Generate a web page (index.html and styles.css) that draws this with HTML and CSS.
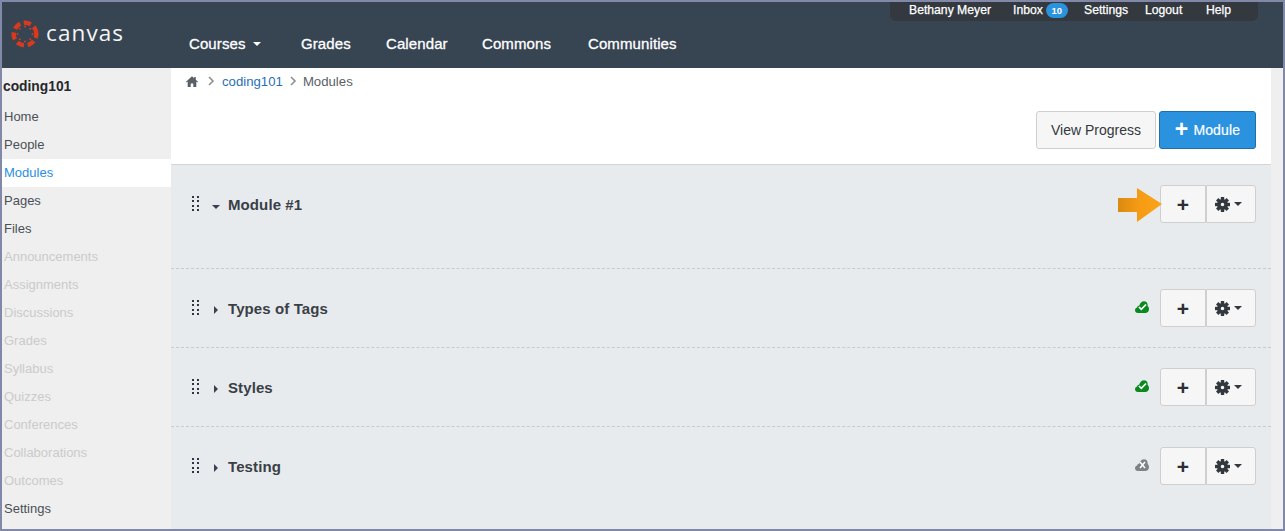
FILE: index.html
```html
<!DOCTYPE html>
<html lang="en">
<head>
<meta charset="utf-8">
<title>Modules</title>
<link rel="stylesheet" href="styles.css">
</head>
<body>
<svg width="0" height="0" class="defs">
  <defs>
    <symbol id="gear" viewBox="0 0 16 16">
      <g fill="#33383e">
        <path d="M8 2.200a5.800 5.800 0 1 0 0 11.600A5.800 5.800 0 0 0 8 2.200zm0 3.900a1.900 1.900 0 1 1 0 3.800 1.900 1.900 0 0 1 0-3.800z" fill-rule="evenodd"/>
        <rect x="6.200" y="0" width="3.600" height="3.500"/>
        <rect x="6.200" y="12.500" width="3.600" height="3.500"/>
        <rect x="0" y="6.200" width="3.500" height="3.600"/>
        <rect x="12.500" y="6.200" width="3.500" height="3.600"/>
        <rect x="6.200" y="0" width="3.600" height="3.500" transform="rotate(45 8 8)"/>
        <rect x="6.200" y="12.500" width="3.600" height="3.500" transform="rotate(45 8 8)"/>
        <rect x="0" y="6.200" width="3.500" height="3.600" transform="rotate(45 8 8)"/>
        <rect x="12.500" y="6.200" width="3.500" height="3.600" transform="rotate(45 8 8)"/>
      </g>
    </symbol>
    <symbol id="grip" viewBox="0 0 7 15">
      <g fill="#2f3642">
        <rect x="0" y="0" width="2" height="2"/><rect x="5" y="0" width="2" height="2"/>
        <rect x="0" y="4" width="2" height="2"/><rect x="5" y="4" width="2" height="2"/>
        <rect x="0" y="9" width="2" height="2"/><rect x="5" y="9" width="2" height="2"/>
        <rect x="0" y="13" width="2" height="2"/><rect x="5" y="13" width="2" height="2"/>
      </g>
    </symbol>
    <symbol id="cloud" viewBox="0 0 14 12">
      <path d="M2.800 12C1.200 12 0 10.800 0 9.200 0 7.900.8 6.900 2 6.500 2.300 5.400 3.200 4.800 4.200 4.800 4.900 2.200 6.800.2 9 .2c2.200 0 3.700 1.700 3.700 3.900 0 .4 0 .7-.1 1C13.500 5.800 14 6.900 14 8.100 14 10.300 12.700 12 10.800 12z"/>
    </symbol>
  </defs>
</svg>
<div class="frame">
  <header class="topbar">
    <a class="brand">
      <svg class="brand-mark" width="28" height="28" viewBox="0 0 28 28" aria-hidden="true">
        <g fill="none" stroke="#d9391e" stroke-width="4.400" stroke-dasharray="7.300 3.700" transform="rotate(-17 14 14)">
          <circle cx="14" cy="14" r="11.300"/>
        </g>
        <g fill="#d9391e">
          <circle cx="14" cy="6.500" r="1"/><circle cx="14" cy="21.500" r="1"/>
          <circle cx="6.500" cy="14" r="1"/><circle cx="21.500" cy="14" r="1"/>
          <circle cx="8.700" cy="8.700" r="1"/><circle cx="19.300" cy="8.700" r="1"/>
          <circle cx="8.700" cy="19.300" r="1"/><circle cx="19.300" cy="19.300" r="1"/>
        </g>
      </svg>
      <span class="brand-name">canvas</span>
    </a>
    <nav class="main-nav">
      <a class="nav-courses">Courses<span class="caret caret-white"></span></a>
      <a class="nav-grades">Grades</a>
      <a class="nav-calendar">Calendar</a>
      <a class="nav-commons">Commons</a>
      <a>Communities</a>
    </nav>
    <nav class="user-nav">
      <a class="u-name">Bethany Meyer</a>
      <a class="u-inbox">Inbox<span class="badge">10</span></a>
      <a class="u-settings">Settings</a>
      <a class="u-logout">Logout</a>
      <a>Help</a>
    </nav>
  </header>
  <div class="body-row">
    <aside class="sidebar">
      <div class="course-title">coding101</div>
      <ul class="side-list">
        <li>Home</li>
        <li>People</li>
        <li class="active">Modules</li>
        <li>Pages</li>
        <li>Files</li>
        <li class="off">Announcements</li>
        <li class="off">Assignments</li>
        <li class="off">Discussions</li>
        <li class="off">Grades</li>
        <li class="off">Syllabus</li>
        <li class="off">Quizzes</li>
        <li class="off">Conferences</li>
        <li class="off">Collaborations</li>
        <li class="off">Outcomes</li>
        <li>Settings</li>
      </ul>
    </aside>
    <main class="content">
      <div class="crumbs">
        <svg class="home" width="12" height="11" viewBox="0 0 12 11" aria-hidden="true"><path fill="#5a6068" d="M6 .3 0 5.700l.7.700L1.700 5.500V11h3V7.500h2.600V11h3V5.500l1 .9.700-.700L9.800 3.700V1H8.200v1.300z"/></svg>
        <svg class="chev chev-first" width="7" height="10" viewBox="0 0 7 10" aria-hidden="true"><path d="M1 1l4 4-4 4" fill="none" stroke="#8f8f8f" stroke-width="1.600"/></svg>
        <a class="crumb-link">coding101</a>
        <svg class="chev" width="7" height="10" viewBox="0 0 7 10" aria-hidden="true"><path d="M1 1l4 4-4 4" fill="none" stroke="#8f8f8f" stroke-width="1.600"/></svg>
        <span class="crumb-now">Modules</span>
      </div>
      <div class="toolbar">
        <button class="btn btn-progress">View Progress</button>
        <button class="btn btn-primary"><span class="plus-big">+</span>Module</button>
      </div>
      <section class="modules">
        <article class="module module-open">
          <svg class="grip"><use href="#grip"/></svg>
          <span class="tri-down"></span>
          <h2>Module #1</h2>
          <div class="actions">
            <div class="add-wrap">
              <svg class="arrow" width="46" height="36" viewBox="0 0 46 36" aria-hidden="true">
                <defs><linearGradient id="arrowfill" x1="0" y1="0" x2="1" y2="0"><stop offset="0" stop-color="#d98a12"/><stop offset=".45" stop-color="#f59a14"/><stop offset="1" stop-color="#fba518"/></linearGradient></defs>
                <path d="M0 11h19V1l25 16-25 18V25H0z" fill="url(#arrowfill)"/>
              </svg>
              <button class="btn btn-add">+</button>
            </div>
            <button class="btn btn-gear"><svg class="gear"><use href="#gear"/></svg><span class="caret"></span></button>
          </div>
        </article>
        <article class="module">
          <svg class="grip"><use href="#grip"/></svg>
          <span class="tri-right"></span>
          <h2>Types of Tags</h2>
          <div class="actions">
            <span class="status ok"><svg class="cloud"><use href="#cloud"/></svg><svg class="mark" viewBox="0 0 9 8"><path d="M1 4l2.300 2.300L8 1.500" fill="none" stroke="#fff" stroke-width="1.700"/></svg></span>
            <button class="btn btn-add">+</button>
            <button class="btn btn-gear"><svg class="gear"><use href="#gear"/></svg><span class="caret"></span></button>
          </div>
        </article>
        <article class="module">
          <svg class="grip"><use href="#grip"/></svg>
          <span class="tri-right"></span>
          <h2>Styles</h2>
          <div class="actions">
            <span class="status ok"><svg class="cloud"><use href="#cloud"/></svg><svg class="mark" viewBox="0 0 9 8"><path d="M1 4l2.300 2.300L8 1.500" fill="none" stroke="#fff" stroke-width="1.700"/></svg></span>
            <button class="btn btn-add">+</button>
            <button class="btn btn-gear"><svg class="gear"><use href="#gear"/></svg><span class="caret"></span></button>
          </div>
        </article>
        <article class="module module-last">
          <svg class="grip"><use href="#grip"/></svg>
          <span class="tri-right"></span>
          <h2>Testing</h2>
          <div class="actions">
            <span class="status off"><svg class="cloud"><use href="#cloud"/></svg><svg class="mark" viewBox="0 0 9 8"><path d="M2 1l5 6M7 1 2 7" fill="none" stroke="#fff" stroke-width="1.500"/></svg></span>
            <button class="btn btn-add">+</button>
            <button class="btn btn-gear"><svg class="gear"><use href="#gear"/></svg><span class="caret"></span></button>
          </div>
        </article>
      </section>
    </main>
    <div class="gutter"></div>
  </div>
</div>
</body>
</html>
```
FILE: styles.css
```css
* { box-sizing: border-box; }
html, body { margin: 0; height: 100%; }
body {
  font-family: "Liberation Sans", Arial, sans-serif;
  overflow: hidden;
  background: #efefef;
}
.defs { position: absolute; }
a { text-decoration: none; color: inherit; }
.frame {
  width: 1285px;
  height: 531px;
  border: 2px solid #8288a8;
  display: flex;
  flex-direction: column;
  background: #efefef;
}
.topbar {
  height: 66px;
  flex: none;
  background: #374452;
  position: relative;
  color: #fff;
  display: flex;
  align-items: flex-start;
}
.brand {
  display: flex;
  align-items: center;
  padding: 18px 0 0 10px;
  gap: 7px;
  width: 187px;
  flex: none;
}
.brand-mark { flex: none; margin-left: -1px; }
.brand-name {
  font-family: "Open Sans", sans-serif;
  font-size: 22.500px;
  line-height: 28px;
  letter-spacing: 1.100px;
  color: #f4f5f6;
  position: relative;
  top: -1px;
}
.main-nav {
  display: flex;
  padding-top: 33px;
  font-size: 15px;
  line-height: 18px;
  letter-spacing: .1px;
  -webkit-text-stroke: .3px #fff;
}
.nav-courses { width: 112px; display: flex; align-items: center; }
.nav-grades { width: 85px; }
.nav-calendar { width: 96px; }
.nav-commons { width: 106px; }
.caret {
  display: inline-block;
  flex: none;
  width: 0; height: 0;
  border-left: 4.500px solid transparent;
  border-right: 4.500px solid transparent;
  border-top: 4.500px solid #33383e;
}
.caret-white { border-top-color: #fff; margin-left: 7px; }
.user-nav {
  position: absolute;
  top: 0;
  right: 25px;
  width: 368px;
  height: 19px;
  background: #33393f;
  border-radius: 0 0 6px 6px;
  display: flex;
  align-items: center;
  padding: 0 0 2px 19px;
  font-size: 12.200px;
  line-height: 15px;
  -webkit-text-stroke: .25px #fff;
}
.u-name { width: 104px; }
.u-inbox { width: 71px; display: flex; align-items: center; }
.u-settings { width: 61px; }
.u-logout { width: 61px; }
.badge {
  background: #2b92dd;
  border-radius: 9px;
  width: 22px;
  height: 15px;
  margin-left: 3px;
  font-size: 9.500px;
  font-weight: bold;
  line-height: 15px;
  text-align: center;
  -webkit-text-stroke: 0;
}
.body-row { flex: 1; display: flex; min-height: 0; }
.sidebar { width: 169px; flex: none; background: #efefef; }
.course-title {
  height: 35px;
  padding: 10px 0 0 1px;
  font-size: 13.800px;
  font-weight: bold;
  line-height: 18px;
  color: #26282b;
}
.side-list { list-style: none; margin: 0; padding: 0; font-size: 13px; color: #4a4f57; }
.side-list li { height: 28px; line-height: 28px; padding-left: 2px; }
.side-list .active { background: #fff; color: #2b8ee0; }
.side-list .off { color: #cbcbcb; }
.content { width: 1100px; flex: none; background: #fff; display: flex; flex-direction: column; }
.gutter { flex: 1; background: #efefef; }
.crumbs {
  height: 43px;
  flex: none;
  display: flex;
  align-items: center;
  padding: 0 0 17px 15px;
  font-size: 13.200px;
  color: #5a5f66;
}
.home { flex: none; }
.chev { flex: none; margin: 0 6px 0 7px; }
.chev-first { margin: 0 7px 0 10px; }
.crumb-link { color: #2a6fb5; }
.toolbar {
  height: 54px;
  flex: none;
  display: flex;
  justify-content: flex-end;
  align-items: flex-start;
  gap: 3px;
  padding-right: 15px;
  border-bottom: 1px solid #d5d5d5;
}
.btn {
  font-family: inherit;
  border: 1px solid #cfcfcf;
  border-radius: 3px;
  background: #f6f6f6;
  color: #33383e;
  padding: 0;
  height: 38px;
  display: flex;
  align-items: center;
  justify-content: center;
}
.btn-progress { width: 120px; font-size: 14px; }
.btn-primary {
  width: 97px;
  font-size: 14px;
  letter-spacing: .15px;
  background: #2b92e0;
  border-color: #1f6fa8;
  color: #fff;
  -webkit-text-stroke: .2px #fff;
}
.plus-big { font-size: 23px; font-weight: bold; line-height: 20px; margin-right: 5px; -webkit-text-stroke: 0; position: relative; top: -1px; }
.modules { flex: 1; background: #e8ebee; min-height: 0; }
.module {
  position: relative;
  height: 79px;
  padding: 20px 15px 0 21px;
  border-bottom: 1px dashed #c8cacc;
  display: flex;
  align-items: flex-start;
}
.module-open { height: 104px; }
.module-last { border-bottom: 0; }
.grip { width: 7px; height: 15px; flex: none; margin-top: 11px; }
.tri-down, .tri-right { display: block; width: 0; height: 0; flex: none; }
.tri-down {
  margin: 20px 8px 0 13px;
  border-left: 4px solid transparent;
  border-right: 4px solid transparent;
  border-top: 4px solid #3a4250;
}
.tri-right {
  margin: 17px 10px 0 15px;
  border-top: 4px solid transparent;
  border-bottom: 4px solid transparent;
  border-left: 4px solid #3a4250;
}
.module h2 {
  margin: 0;
  font-size: 15px;
  letter-spacing: .1px;
  line-height: 18px;
  font-weight: bold;
  color: #3a3f47;
  padding-top: 11px;
}
.actions { margin-left: auto; display: flex; align-items: flex-start; }
.add-wrap { position: relative; }
.arrow { position: absolute; left: -42px; top: 2px; z-index: 1; pointer-events: none; }
.btn-add {
  width: 46px;
  font-size: 21px;
  font-weight: bold;
  line-height: 1;
  color: #2b2e33;
  border-radius: 3px 0 0 3px;
}
.btn-gear {
  width: 50px;
  border-radius: 0 3px 3px 0;
  justify-content: flex-start;
  padding-left: 8px;
  gap: 4px;
}
.gear { width: 15px; height: 15px; flex: none; }
.status { position: relative; width: 14px; height: 12px; margin: 12px 11px 0 0; display: block; }
.cloud { position: absolute; inset: 0; width: 14px; height: 12px; }
.status.ok .cloud { fill: #0a8a1e; }
.status.off .cloud { fill: #7f8286; }
.mark { position: absolute; left: 3px; top: 2px; width: 9px; height: 8px; }
```
